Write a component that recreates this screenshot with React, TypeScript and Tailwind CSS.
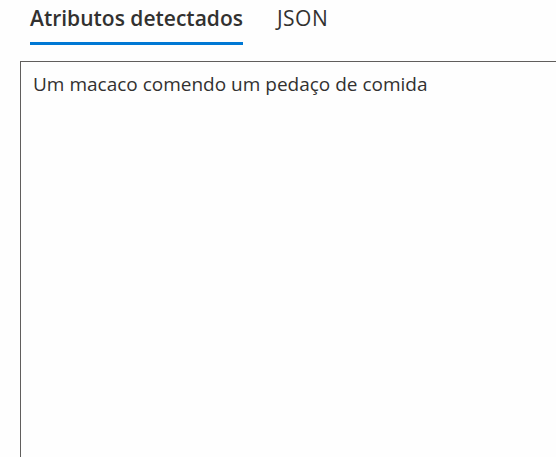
export default function App() {
  return (
    <div className="h-[457px] w-[556px] overflow-hidden bg-[#fefefe] font-['Open_Sans',sans-serif] text-[#323130]">
      <div className="flex items-start gap-[34px] pl-[30px] pt-[4px]">
        <div className="flex flex-col">
          <span className="text-[21px] font-semibold leading-[28px]">Atributos detectados</span>
          <div className="mt-[10px] h-[3px] bg-[#0078d4]" />
        </div>
        <div className="flex flex-col">
          <span className="text-[21px] leading-[28px] tracking-[0.5px]">JSON</span>
        </div>
      </div>
      <div className="ml-[20px] mt-[16px] h-[420px] w-[545px] border border-[#605e5c] px-[12px] pt-[9px]">
        <p className="text-[19px] leading-[26px]">Um macaco comendo um pedaço de comida</p>
      </div>
    </div>
  );
}
